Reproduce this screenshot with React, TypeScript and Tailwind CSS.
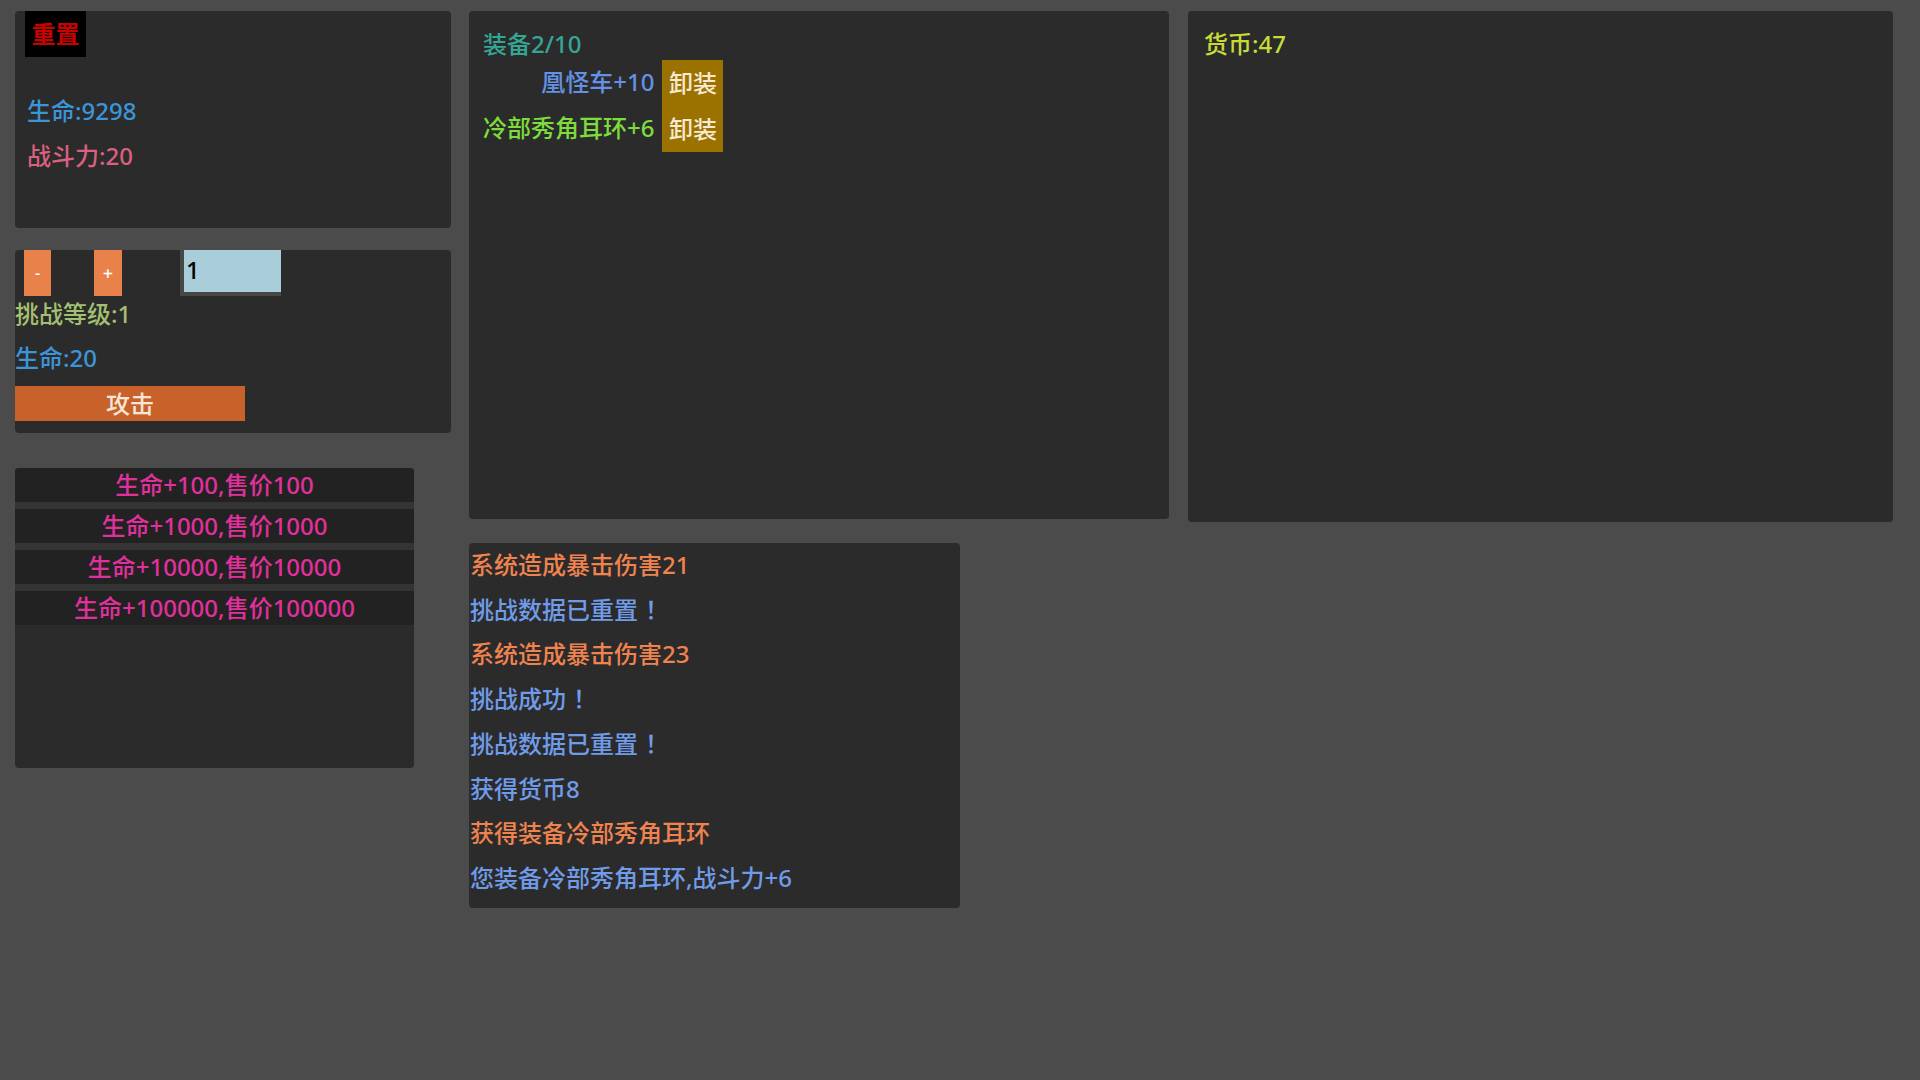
import React from "react";

const font = { fontFamily: '"Noto Sans", "Noto Sans CJK SC", sans-serif' };

const shopItems = [
  { hp: 100, price: 100 },
  { hp: 1000, price: 1000 },
  { hp: 10000, price: 10000 },
  { hp: 100000, price: 100000 },
];

const equips = [
  { name: "凰怪车+10", color: "text-[#6391e3]" },
  { name: "冷部秀角耳环+6", color: "text-[#7ddc3c]" },
];

const logs = [
  { text: "系统造成暴击伤害21", warn: true },
  { text: "挑战数据已重置！", warn: false },
  { text: "系统造成暴击伤害23", warn: true },
  { text: "挑战成功！", warn: false },
  { text: "挑战数据已重置！", warn: false },
  { text: "获得货币8", warn: false },
  { text: "获得装备冷部秀角耳环", warn: true },
  { text: "您装备冷部秀角耳环,战斗力+6", warn: false },
];

// full-width "！" sits in the middle of its cell, as in the game log
function LogText({ text }: { text: string }) {
  if (!text.endsWith("！")) return <>{text}</>;
  return (
    <>
      {text.slice(0, -1)}
      <span className="inline-block pl-[7px]">！</span>
    </>
  );
}

function StatsPanel() {
  return (
    <div className="h-[217px] rounded-[4px] bg-[#2b2b2b]">
      <button className="ml-[10px] h-[46px] w-[61px] bg-black text-[24px] font-bold text-[#c80000]">重置</button>
      <div className="mt-[31px] pl-[12px] text-[24px] leading-[45px]">
        <div className="text-[#3b95d8]">生命:9298</div>
        <div className="text-[#d9607f]">战斗力:20</div>
      </div>
    </div>
  );
}

function ChallengePanel() {
  return (
    <div className="mt-[22px] h-[183px] rounded-[4px] bg-[#2b2b2b]">
      <div className="flex h-[46px] items-stretch">
        <button className="ml-[9px] w-[27px] bg-[#e8824a] text-[16px] text-white">-</button>
        <button className="ml-[43px] w-[28px] bg-[#e8824a] text-[18px] text-white">+</button>
        <input
          defaultValue="1"
          className="ml-[58px] w-[101px] border-b-[4px] border-l-[4px] border-[#474747] bg-[#a9cdd9] pb-[3px] pl-[2px] text-[24px] text-black outline-none"
        />
      </div>
      <div className="h-[40px] text-[24px] leading-[35px] text-[#a3c070]">挑战等级:1</div>
      <div className="h-[44px] text-[24px] leading-[44px] text-[#3b95d8]">生命:20</div>
      <button className="mt-[6px] h-[35px] w-[230px] bg-[#c9622a] text-[24px] leading-[35px] text-[#f6e6da]">攻击</button>
    </div>
  );
}

function ShopPanel() {
  return (
    <div className="mt-[35px] h-[300px] w-[399px] overflow-hidden rounded-[4px] bg-[#2b2b2b]">
      {shopItems.map((s, i) => (
        <div
          key={s.hp}
          className={
            i > 0
              ? "h-[41px] border-t-[7px] border-[#343434] bg-[#222222] text-center text-[24px] leading-[33px] text-[#e0309c]"
              : "h-[34px] bg-[#222222] text-center text-[24px] leading-[33px] text-[#e0309c]"
          }
        >
          生命+{s.hp},售价{s.price}
        </div>
      ))}
    </div>
  );
}

function EquipPanel() {
  return (
    <div className="h-[508px] rounded-[4px] bg-[#2b2b2b] pl-[14px] pt-[16px]">
      <div className="h-[33px] text-[24px] leading-[34px] text-[#35a596]">装备2/10</div>
      <div className="grid w-fit grid-cols-[auto_auto] gap-x-[8px]">
        {equips.map((e) => (
          <React.Fragment key={e.name}>
            <div className={`h-[46px] text-right text-[24px] leading-[44px] ${e.color}`}>{e.name}</div>
            <button className="h-[46px] w-[61px] bg-[#9b7100] text-[24px] leading-[44px] text-[#f7ead0]">卸装</button>
          </React.Fragment>
        ))}
      </div>
    </div>
  );
}

function LogPanel() {
  return (
    <div className="mt-[24px] h-[365px] w-[491px] rounded-[4px] bg-[#2b2b2b] pl-[1px]">
      {logs.map((l, i) => (
        <div key={i} className={`text-[24px] leading-[44.7px] ${l.warn ? "text-[#ef8350]" : "text-[#6f9be8]"}`}>
          <LogText text={l.text} />
        </div>
      ))}
    </div>
  );
}

function WalletPanel() {
  return (
    <div className="ml-[19px] h-[511px] w-[705px] rounded-[4px] bg-[#2b2b2b] pl-[16px] pt-[16px]">
      <div className="text-[24px] leading-[34px] text-[#c6dc34]">货币:47</div>
    </div>
  );
}

export default function App() {
  return (
    <div className="flex h-[1080px] w-full items-start bg-[#4b4b4b] pl-[15px] pt-[11px] font-medium" style={font}>
      <div className="flex w-[436px] flex-col">
        <StatsPanel />
        <ChallengePanel />
        <ShopPanel />
      </div>
      <div className="ml-[18px] flex w-[700px] flex-col">
        <EquipPanel />
        <LogPanel />
      </div>
      <WalletPanel />
    </div>
  );
}
